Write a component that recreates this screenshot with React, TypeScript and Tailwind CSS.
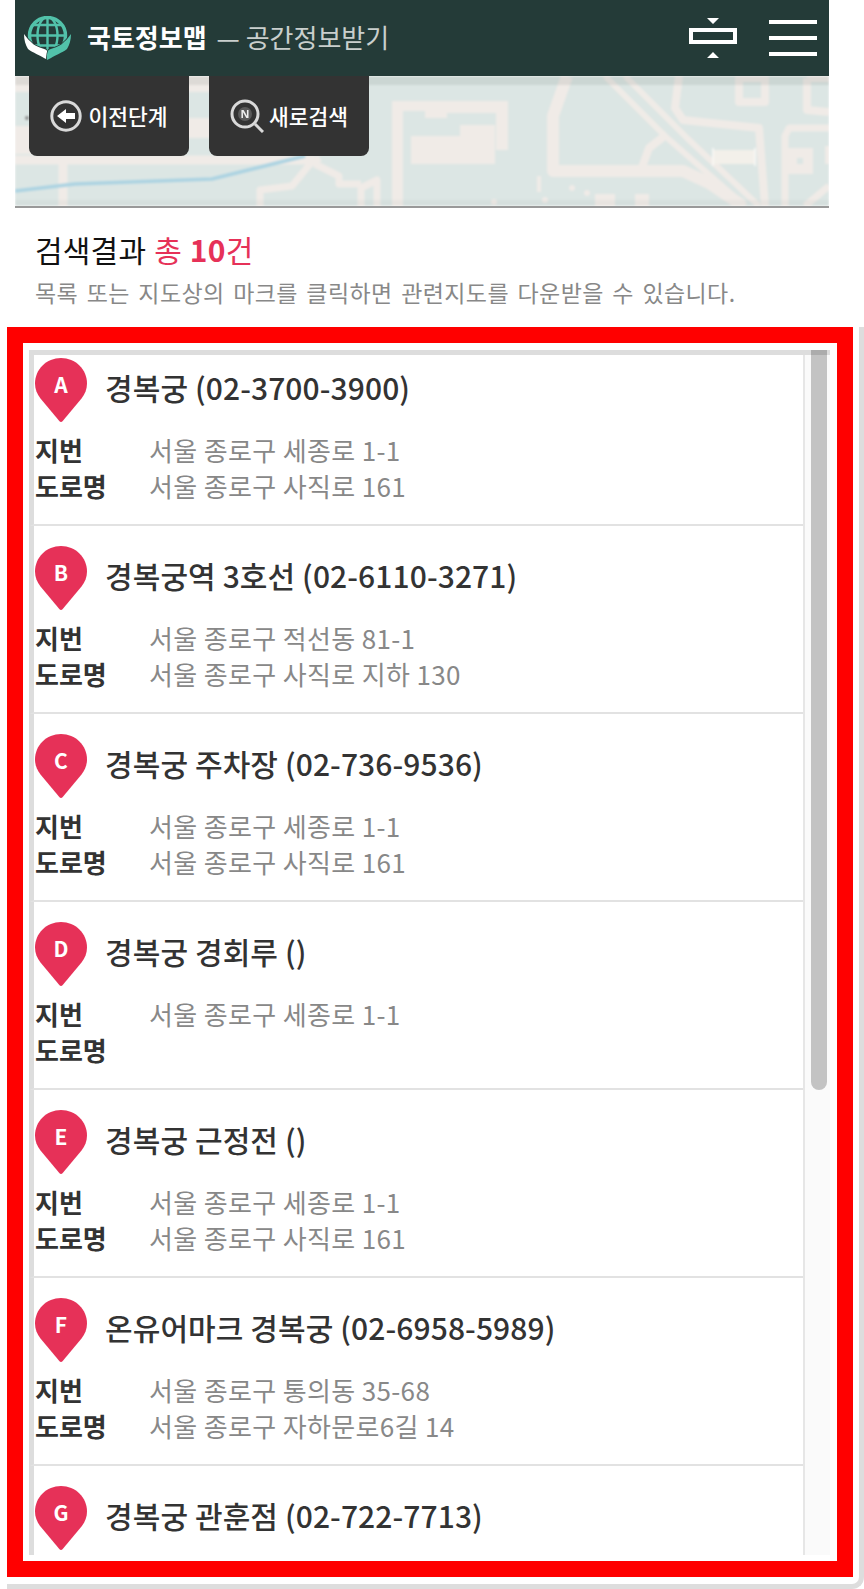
const results = [
  { mark: 'A', name: '경복궁 (02-3700-3900)', jibun: '서울 종로구 세종로 1-1', road: '서울 종로구 사직로 161' },
  { mark: 'B', name: '경복궁역 3호선 (02-6110-3271)', jibun: '서울 종로구 적선동 81-1', road: '서울 종로구 사직로 지하 130' },
  { mark: 'C', name: '경복궁 주차장 (02-736-9536)', jibun: '서울 종로구 세종로 1-1', road: '서울 종로구 사직로 161' },
  { mark: 'D', name: '경복궁 경회루 ()', jibun: '서울 종로구 세종로 1-1', road: '' },
  { mark: 'E', name: '경복궁 근정전 ()', jibun: '서울 종로구 세종로 1-1', road: '서울 종로구 사직로 161' },
  { mark: 'F', name: '온유어마크 경복궁 (02-6958-5989)', jibun: '서울 종로구 통의동 35-68', road: '서울 종로구 자하문로6길 14' },
  { mark: 'G', name: '경복궁 관훈점 (02-722-7713)' },
];

function Logo() {
  return (
    <svg width="47" height="44" viewBox="0 0 47 44" className="shrink-0 blur-[0.4px]">
      <circle cx="23.5" cy="19.5" r="18" fill="none" stroke="#52c2aa" strokeWidth="3.4" />
      <g fill="none" stroke="#52c2aa" strokeWidth="2.4">
        <ellipse cx="23.5" cy="19.5" rx="10" ry="18.5" />
        <path d="M23.5 1v40M8 9h31M4 19.5h39M7 29.5h33" />
      </g>
      <path d="M0 18c0 6 1.500 11 4 15 5 4 12 6 16 9l4 2c.5-4 0-7-1.500-10-3-1.500-6-2-9-3.500-3-1-5-3-7-5-2.500-2-4-4.500-6.500-7.500z" fill="#fff" stroke="#243b38" strokeWidth="1.500" paintOrder="stroke" />
      <path d="M47 18c0 6-1.500 11-4 15-5 4-12 6-16 9l-4 2c-.5-4 0-7 1.500-10 3-1.500 6-2 9-3.500 3-1 5-3 7-5 2.500-2 4-4.500 6.500-7.500z" fill="#52c2aa" stroke="#243b38" strokeWidth="1.500" paintOrder="stroke" />
    </svg>
  );
}

function MapBackdrop() {
  return (
    <svg viewBox="0 0 814 130" width="814" height="130" className="block blur-[1px]">
      <rect width="814" height="130" fill="#dce6e4" />
      <g fill="#f0ebe7">
        <path d="M0 0h40v16H0zM0 50h20v28H0zM170 0h30v16h-30zM170 42h30v20h-30z" />
        <path d="M410 25h83v49h-12V37h-49v5h-22zM410 60h35V49h35v39h-70z" />
        <path d="M377 25h33v10h-22v95h-11zM396 60h14v28h-14z" />
        <path d="M772 72h26v26h-26zM620 118h14v12h-14zM580 118h20v12h-20zM810 70h4v18h-4z" />
        <circle cx="557" cy="112" r="3" />
        <circle cx="572" cy="117" r="3" />
        <circle cx="479" cy="126" r="3" />
        <circle cx="530" cy="124" r="3" />
      </g>
      <rect x="782" y="82" width="6" height="6" fill="#dce6e4" />
      <g fill="none" stroke="#f0ebe7" strokeLinejoin="round">
        <path d="M48 80v50M0 84h300" strokeWidth="9" />
        <path d="M245 130v-16l32-4 18-22 10-6M300 88l24 12v8h22M346 130v-18l16-8v26" strokeWidth="7" />
        <path d="M552 0l-14 40v55h130l26 12 34 23" strokeWidth="12" />
        <path d="M590 0l60 60 80 70" strokeWidth="6" />
        <path d="M610 0l62 62 72 68" strokeWidth="6" />
        <path d="M652 58l-18 14-8 22" strokeWidth="8" />
        <path d="M664 0l-4 32 8 12 76 8 6 78" strokeWidth="8" />
        <path d="M724 2v24h26V2z" strokeWidth="8" />
        <path d="M792 2v32l22 2M814 2h-22" strokeWidth="8" />
        <path d="M770 130v-70l4-8h40" strokeWidth="7" />
        <path d="M790 130l24-20" strokeWidth="7" />
        <path d="M524 100v16" strokeWidth="4" />
      </g>
      <path d="M698 74h42v14h-42z" fill="#f3f0ea" />
      <path d="M698 72v18M740 72v18" stroke="#fbfaf7" strokeWidth="1.5" />
      <path d="M0 115l60-7 137-5 93-23" fill="none" stroke="#acd3e2" strokeWidth="3.5" />
      <circle cx="12" cy="42" r="2" fill="#8d8d8d" />
      <rect width="814" height="9" fill="#5d6a68" opacity="0.13" />
      <rect y="124" width="814" height="6" fill="#5d6a68" opacity="0.05" />
    </svg>
  );
}

function BackIcon() {
  return (
    <svg width="32" height="32" viewBox="0 0 32 32" className="shrink-0 blur-[0.4px]">
      <circle cx="16" cy="16" r="14.2" fill="none" stroke="#d9d9d9" strokeWidth="3" />
      <path d="M7 16l9-7v4h9v6h-9v4z" fill="#fff" />
    </svg>
  );
}

function SearchIcon() {
  return (
    <svg width="34" height="34" viewBox="0 0 34 34" className="shrink-0 blur-[0.4px]">
      <circle cx="15" cy="15" r="13" fill="none" stroke="#d9d9d9" strokeWidth="3" />
      <circle cx="15" cy="15" r="7" fill="#5a5a5a" />
      <path d="M25 25l8 8" stroke="#d9d9d9" strokeWidth="3" />
      <text x="15" y="19" textAnchor="middle" fontSize="11" fontWeight="700" fill="#eee" fontFamily="'Noto Sans', sans-serif">N</text>
    </svg>
  );
}

function Pin({ mark }: { mark: string }) {
  return (
    <div className="relative w-[52px] h-[64px] shrink-0">
      <svg width="52" height="64" viewBox="0 0 52 64" className="block">
        <path d="M26 0C11.6 0 0 11.4 0 25.5 0 31 2 36 5.5 40.5L24.5 63.3c.8.9 2.2.9 3 0L46.5 40.5C50 36 52 31 52 25.5 52 11.4 40.4 0 26 0z" fill="#e63158" />
      </svg>
      <span className="absolute top-[10px] left-0 w-full text-center text-[21px] leading-[32px] font-bold text-white">{mark}</span>
    </div>
  );
}

export default function App() {
  return (
    <div className="w-[864px] h-[1589px] overflow-hidden bg-white font-['Noto_Sans_CJK_KR','Noto_Sans',sans-serif]">
      <header className="ml-[15px] w-[814px] h-[76px] bg-[#243b38] flex items-center pl-[9px] pr-[12px]">
        <Logo />
        <h1 className="ml-[16px] -mt-[3px] text-[26px] font-bold text-white leading-none">국토정보맵</h1>
        <span className="ml-[10px] -mt-[3px] text-[26px] text-[#c9cfcd] leading-none">— 공간정보받기</span>
        <svg width="48" height="40" viewBox="0 0 48 40" className="ml-auto mr-[32px]">
          <path d="M18 0h12l-6 6zM18 40h12l-6-6z" fill="#fff" />
          <rect x="2" y="12" width="44" height="12" fill="none" stroke="#fff" strokeWidth="4" />
        </svg>
        <div className="flex flex-col gap-[12px] w-[48px]">
          <div className="h-[4px] bg-white" />
          <div className="h-[4px] bg-white" />
          <div className="h-[4px] bg-white" />
        </div>
      </header>

      <div className="relative ml-[15px] w-[814px] h-[132px] border-b-2 border-[#999999] overflow-hidden">
        <MapBackdrop />
        <div className="absolute top-0 left-[14px] flex gap-[20px]">
          <button className="w-[160px] h-[80px] bg-[#333333] rounded-b-lg flex items-center justify-center gap-[6px] text-[21.5px] font-medium text-white">
            <BackIcon />
            이전단계
          </button>
          <button className="w-[160px] h-[80px] bg-[#333333] rounded-b-lg flex items-center justify-center gap-[5px] text-[21.5px] font-medium text-white">
            <SearchIcon />
            새로검색
          </button>
        </div>
      </div>

      <section className="pl-[35px] h-[119px] pt-[23px]">
        <h2 className="text-[30px] leading-[36px] [word-spacing:1px] tracking-[0.2px] text-[#111111]">
          검색결과 <span className="text-[#e63158]">총 <b>10</b>건</span>
        </h2>
        <p className="mt-[9px] text-[23px] leading-[32px] tracking-[0.4px] [word-spacing:3px] text-[#888888]">목록 또는 지도상의 마크를 클릭하면 관련지도를 다운받을 수 있습니다.</p>
      </section>

      <div className="ml-[7px] w-[857px] h-[1262px] pr-[6px] pb-[7px] border-r-[5px] border-b-[5px] border-[#dddddd] rounded-br-[12px]">
        <div className="h-full border-[16px] border-[#ff0000] pl-[6px] pr-[6px] pt-[7px] pb-[6px]">
          <div className="h-full w-[801px] flex border-t-[5px] border-[#dddddd]">
            <div className="flex-1 min-w-0 overflow-hidden">
              <ul className="-mt-[17px]">
                {results.map((item) => (
                  <li key={item.mark} className="h-[188px] border-l-[5px] border-l-[#dddddd] pl-[1px] pt-[20px] border-b-2 border-b-[#e2e2e2]">
                    <div className="flex items-center">
                      <Pin mark={item.mark} />
                      <p className="ml-[18px] -mt-[6px] text-[30px] leading-[40px] tracking-[0.1px] font-medium text-[#333333]">{item.name}</p>
                    </div>
                    {item.jibun && (
                      <dl className="mt-[10px] leading-[36px]">
                        <div className="flex h-[36px]">
                          <dt className="w-[114px] text-[26px] font-bold text-[#333333]">지번</dt>
                          <dd className="text-[26px] tracking-[0.35px] text-[#888888]">{item.jibun}</dd>
                        </div>
                        <div className="flex h-[36px]">
                          <dt className="w-[114px] text-[26px] font-bold text-[#333333]">도로명</dt>
                          <dd className="text-[26px] tracking-[0.35px] text-[#888888]">{item.road}</dd>
                        </div>
                      </dl>
                    )}
                  </li>
                ))}
              </ul>
            </div>
            <div className="relative w-[27px] shrink-0 border-l-2 border-[#e6e6e6] bg-[#fafafa]">
              <div className="absolute -top-[5px] left-[6px] w-[16px] h-[740px] rounded-b-[8px] bg-[#00000038]" />
            </div>
          </div>
        </div>
      </div>
    </div>
  );
}
